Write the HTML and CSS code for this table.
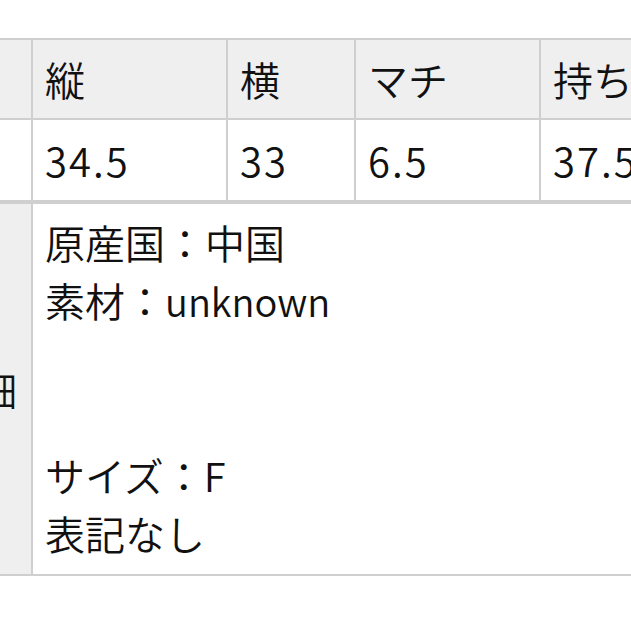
FILE: index.html
```html
<!DOCTYPE html>
<html lang="ja">
<head>
<meta charset="utf-8">
<link rel="stylesheet" href="styles.css">
</head>
<body>
<div class="page">
  <div class="sizes">
    <div class="cell head label"></div>
    <div class="cell head">縦</div>
    <div class="cell head">横</div>
    <div class="cell head">マチ</div>
    <div class="cell head">持ち手</div>
    <div class="cell label-white"></div>
    <div class="cell num">34.5</div>
    <div class="cell num">33</div>
    <div class="cell num">6.5</div>
    <div class="cell num">37.5</div>
  </div>
  <div class="detail">
    <div class="cell side"><span>詳細</span></div>
    <div class="cell body">
      <p>原産国：中国</p>
      <p>素材：<span class="latin">unknown</span></p>
      <p>&nbsp;</p>
      <p>&nbsp;</p>
      <p>サイズ：F</p>
      <p>表記なし</p>
    </div>
  </div>
</div>
</body>
</html>
```
FILE: styles.css
```css
html, body {
  margin: 0;
  padding: 0;
  background: #fff;
  overflow: hidden;
}
body {
  font-family: "Noto Sans CJK JP", "Noto Sans", sans-serif;
  font-weight: 350;
  color: #111;
  font-size: 40px;
}
.page {
  padding-top: 38px;
  width: 760px;
}
.sizes {
  display: grid;
  grid-template-columns: 31px 193px 126px 183px 1fr;
  grid-template-rows: 78px 80px;
  gap: 2px;
  background: #cfcfcf;
  padding: 2px 0;
}
.detail {
  display: grid;
  grid-template-columns: 31px 1fr;
  gap: 2px;
  background: #cfcfcf;
  padding: 2px 0;
}
.cell {
  background: #fff;
  display: flex;
  align-items: center;
  padding-left: 12px;
  white-space: nowrap;
  overflow: hidden;
  line-height: 1;
}
.cell.num {
  letter-spacing: 2px;
}
.latin {
  font-size: 38px;
}
.cell.head {
  background: #efefef;
}
.cell.label, .cell.label-white, .cell.side {
  padding-left: 0;
}
.cell.side {
  background: #efefef;
  justify-content: flex-end;
  padding-right: 14px;
}
.cell.body {
  display: block;
  padding: 9px 12px 13px;
  height: 348px;
}
.cell.body p {
  margin: 0;
  line-height: 58px;
}
```
